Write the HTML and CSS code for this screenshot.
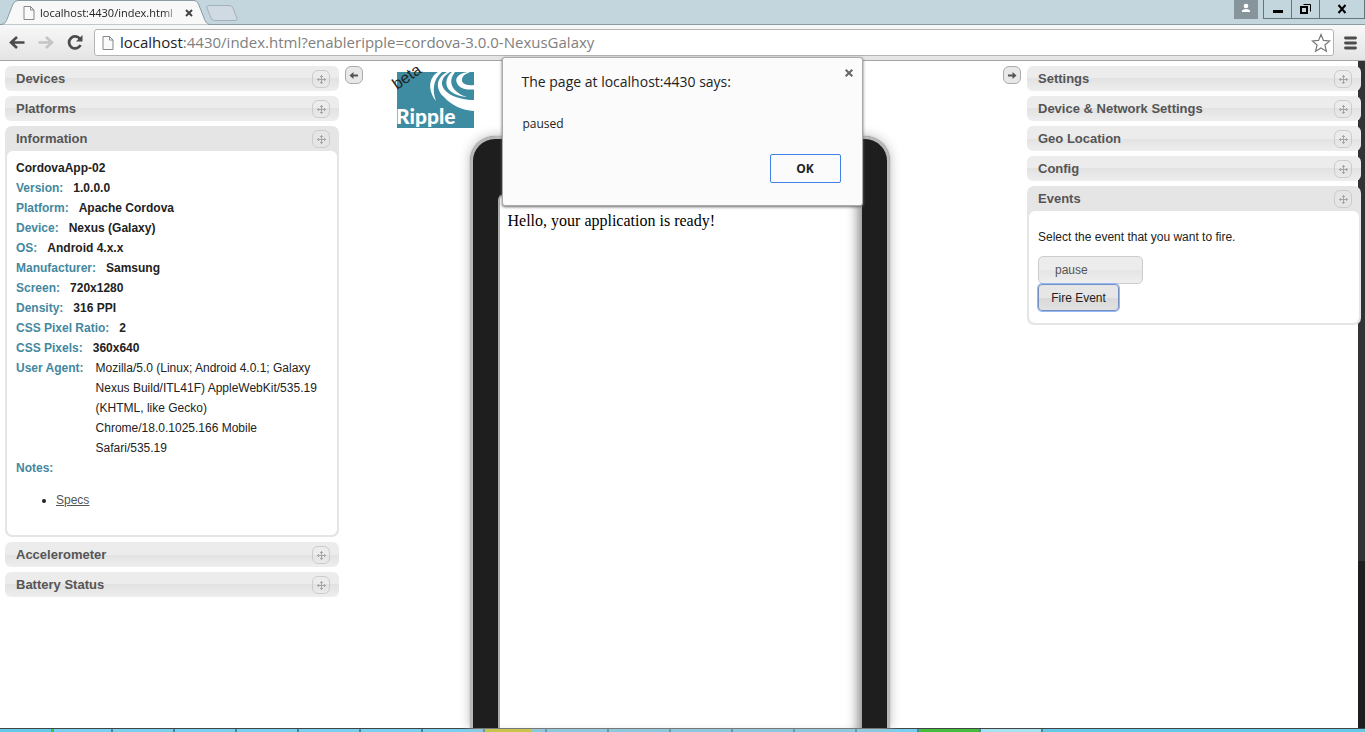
FILE: index.html
```html
<!DOCTYPE html>
<html lang="en">
<head>
<meta charset="utf-8">
<title>localhost:4430/index.html</title>
<link rel="stylesheet" href="styles.css">
</head>
<body>
<svg class="defs" aria-hidden="true">
  <symbol id="move" viewBox="0 0 16 16"><path d="M8.500 4v9M4 8.500h9M7 5.500h3M7 11.500h3M5.500 7v3M11.500 7v3" fill="none" stroke="#a5a5a5"/></symbol>
  <symbol id="page" viewBox="0 0 12 14"><path d="M1 .5h6.500l3.500 3.500v9.500H1zM7.500 .5V4H11" fill="#fafafa" stroke="#888"/></symbol>
</svg>
<header class="browser">
  <div class="titlebar">
    <div class="tab">
      <svg class="tab-shape" viewBox="0 0 240 25"><path d="M0 24.500C5 24.500 6 22 7.500 18L13 4Q14.500 .5 18 .5H194Q197 .5 198.500 4L204 18C206 23 207 24.500 211 24.500" fill="#f8f8f8" stroke="#8a9ba3"/><path d="M210 5.500H229Q232 5.500 233 8L237 18Q238 20.500 235 20.500H215Q212 20.500 211 18L207 8Q206 5.500 210 5.500Z" fill="#cfdae3" stroke="#a3b1bb"/></svg>
      <svg class="page-icon"><use href="#page"/></svg>
      <span class="tab-title">localhost:4430/index.html</span>
      <button class="tab-close" aria-label="Close tab"><svg viewBox="0 0 8 8"><path d="M1 1l6 6M7 1L1 7" stroke="#444" stroke-width="2"/></svg></button>
    </div>
    <div class="window-controls">
      <button class="user" aria-label="User"><svg viewBox="0 0 24 19"><circle cx="12" cy="6" r="2.300" fill="#fff"/><path d="M8 12V10.500Q9 9 12 9T16 10.500V12Z" fill="#fff"/></svg></button>
      <button class="win" aria-label="Minimize"><svg viewBox="0 0 28 19"><path d="M9 11.500H19" stroke="#000" stroke-width="3"/></svg></button>
      <button class="win" aria-label="Restore"><svg viewBox="0 0 28 19"><path d="M11.500 4.500H18.500V11.500" fill="none" stroke="#000"/><path d="M9 7H15V13H9Z" fill="none" stroke="#000" stroke-width="2"/></svg></button>
      <button class="win wide" aria-label="Close window"><svg viewBox="0 0 28 19"><path d="M10.500 5L17.500 13M17.500 5L10.500 13" stroke="#000" stroke-width="2"/></svg></button>
    </div>
  </div>
  <div class="toolbar">
    <button class="nav" aria-label="Back"><svg viewBox="0 0 16 16"><path d="M15.500 7.500H2M8 2L2 7.500L8 13" fill="none" stroke="#4c4c4c" stroke-width="2.600"/></svg></button>
    <button class="nav" aria-label="Forward"><svg viewBox="0 0 16 16"><path d="M.5 7.500H14M8 2L14 7.500L8 13" fill="none" stroke="#c5c5c5" stroke-width="2.600"/></svg></button>
    <button class="nav" aria-label="Reload"><svg viewBox="0 0 16 16"><path d="M13 4A6 6 0 1 0 13.500 10" fill="none" stroke="#4c4c4c" stroke-width="2.800"/><path d="M15.500 0V6.500H9Z" fill="#4c4c4c"/></svg></button>
    <div class="address">
      <svg class="page-icon"><use href="#page"/></svg>
      <span class="url"><b>localhost</b>:4430/index.html?enableripple=cordova-3.0.0-NexusGalaxy</span>
      <svg class="star" viewBox="0 0 20 20"><path d="M10 1.500L12.400 7.400L18.700 7.900L13.900 12L15.400 18.200L10 14.900L4.600 18.200L6.100 12L1.300 7.900L7.600 7.400Z" fill="#fff" stroke="#777" stroke-width="1.200"/></svg>
    </div>
    <button class="menu" aria-label="Menu"><svg viewBox="0 0 13 14"><path d="M1.500 2H11.500M1.500 7H11.500M1.500 12H11.500" stroke="#4c4c4c" stroke-width="2.800" stroke-linecap="round"/></svg></button>
  </div>
</header>

<div class="workspace">
  <aside class="panels">
    <section class="panel"><h2>Devices<svg class="handle"><use href="#move"/></svg></h2></section>
    <section class="panel"><h2>Platforms<svg class="handle"><use href="#move"/></svg></h2></section>
    <section class="panel open"><h2>Information<svg class="handle"><use href="#move"/></svg></h2>
      <div class="panel-body info">
        <strong>CordovaApp-02</strong>
        <dl>
          <div><dt>Version:</dt><dd>1.0.0.0</dd></div>
          <div><dt>Platform:</dt><dd>Apache Cordova</dd></div>
          <div><dt>Device:</dt><dd>Nexus (Galaxy)</dd></div>
          <div><dt>OS:</dt><dd>Android 4.x.x</dd></div>
          <div><dt>Manufacturer:</dt><dd>Samsung</dd></div>
          <div><dt>Screen:</dt><dd>720x1280</dd></div>
          <div><dt>Density:</dt><dd>316 PPI</dd></div>
          <div><dt>CSS Pixel Ratio:</dt><dd>2</dd></div>
          <div><dt>CSS Pixels:</dt><dd>360x640</dd></div>
          <div class="agent"><dt>User Agent:</dt><dd>Mozilla/5.0 (Linux; Android 4.0.1; Galaxy Nexus Build/ITL41F) AppleWebKit/535.19 (KHTML, like Gecko) Chrome/18.0.1025.166 Mobile Safari/535.19</dd></div>
          <div><dt>Notes:</dt></div>
        </dl>
        <ul><li><a href="#specs">Specs</a></li></ul>
      </div>
    </section>
    <section class="panel"><h2>Accelerometer<svg class="handle"><use href="#move"/></svg></h2></section>
    <section class="panel"><h2>Battery Status<svg class="handle"><use href="#move"/></svg></h2></section>
  </aside>
  <button class="toggle" aria-label="Hide left panels"><svg viewBox="0 0 10 10"><path d="M9 5.500H2" stroke="#555" stroke-width="2"/><path d="M0.500 5.500L4.500 2V9Z" fill="#555"/></svg></button>
  <main class="stage">
    <svg class="logo" viewBox="0 0 86 68" role="img" aria-label="Ripple beta">
      <path d="M7 10H84V66H7Z" fill="#3d8ca1"/>
      <g fill="#fff">
        <path d="M48 10C38 16 38 29 46 39C42 28 43 18 52 10Z"/>
        <path d="M57 10C46 16 45 27 54 35C62 44 72 48 84 49V38C68 38 51 31 52 20Q53 14 60 10Z"/>
        <path d="M62 10C52 18 54 34 79 35C62 31 57 20 65 10Z"/>
        <path d="M67 10C58 20 64 35 84 36V33C69 32 62 20 69 10Z" fill="#3d8ca1"/>
        <path d="M78 10C70 11 65 15 66.500 20C69 27 76 28 84 27.500V23C76 24 71 21 72 17C73 13 76 12 80 10Z"/>
      </g>
      <text class="logo-name" x="6" y="62">Ripple</text>
      <text class="logo-beta" transform="translate(7 28) rotate(-35)">beta</text>
    </svg>
    <div class="device"><div class="screen">Hello, your application is ready!</div></div>
  </main>
  <button class="toggle" aria-label="Hide right panels"><svg viewBox="0 0 10 10"><path d="M1 5.500H8" stroke="#555" stroke-width="2"/><path d="M9.500 5.500L5.500 2V9Z" fill="#555"/></svg></button>
  <aside class="panels">
    <section class="panel"><h2>Settings<svg class="handle"><use href="#move"/></svg></h2></section>
    <section class="panel"><h2>Device &amp; Network Settings<svg class="handle"><use href="#move"/></svg></h2></section>
    <section class="panel"><h2>Geo Location<svg class="handle"><use href="#move"/></svg></h2></section>
    <section class="panel"><h2>Config<svg class="handle"><use href="#move"/></svg></h2></section>
    <section class="panel open"><h2>Events<svg class="handle"><use href="#move"/></svg></h2>
      <div class="panel-body events">
        <label for="event">Select the event that you want to fire.</label>
        <select id="event"><option>pause</option></select>
        <button class="fire">Fire Event</button>
      </div>
    </section>
  </aside>
  <div class="scrollbar"></div>
</div>

<footer class="taskbar">
  <i class="start"></i><i class="mark"></i><i class="first"></i><i></i><i></i><i></i><i></i><i></i><i></i><i class="yellow"></i><i></i><i></i><i></i><i></i><i></i><i></i><i class="green"></i><i class="pale"></i>
</footer>

<div class="dialog" role="dialog" aria-labelledby="dialog-title">
  <button class="dialog-close" aria-label="Close"><svg viewBox="0 0 8 8"><path d="M.7 .7l6.600 6.600M7.300 .7L.7 7.300" stroke="#666" stroke-width="2"/></svg></button>
  <h1 id="dialog-title">The page at localhost:4430 says:</h1>
  <p>paused</p>
  <button class="ok">OK</button>
</div>
</body>
</html>
```
FILE: styles.css
```css
* { box-sizing: border-box; }
body {
  margin: 0;
  height: 100vh;
  display: flex;
  flex-direction: column;
  position: relative;
  overflow: hidden;
  background: #fff;
  color: #222;
  font: 12px/20px "Liberation Sans", Arial, sans-serif;
}
svg { display: block; }
.defs { position: absolute; width: 0; height: 0; }
button { padding: 0; border: 0; background: none; font: inherit; color: inherit; }

.browser { font-family: "Open Sans", sans-serif; border-bottom: 1px solid #a5a5a5; }
.titlebar {
  display: flex;
  justify-content: space-between;
  height: 25px;
  background: #c3d6dd;
  border-bottom: 1px solid #8a9ba3;
}
.tab {
  position: relative;
  display: flex;
  align-items: center;
  width: 240px;
  height: 25px;
  padding-left: 23px;
}
.tab-shape { position: absolute; left: 0; top: 0; width: 240px; height: 25px; }
.page-icon { position: relative; flex: none; width: 12px; height: 14px; }
.tab-title {
  position: relative;
  width: 140px;
  margin-left: 5px;
  white-space: nowrap;
  color: #222;
  font-size: 11px;
  -webkit-mask-image: linear-gradient(to right, #000 88%, transparent);
  mask-image: linear-gradient(to right, #000 88%, transparent);
}
.tab-close { position: relative; width: 8px; margin-left: 5px; }
.window-controls { display: flex; }
.window-controls button { height: 19px; }
.window-controls svg { height: 19px; margin: 0 auto; }
.user { width: 24px; margin-right: 5px; background: #87949b; }
.win { width: 28px; border: solid #66747b; border-width: 0 0 1px 1px; }
.wide { width: 46px; border-right-width: 1px; }
.toolbar {
  display: flex;
  align-items: center;
  height: 35px;
  padding: 0 8px 0 9px;
  background: linear-gradient(#f8f8f8, #e4e4e4);
}
.nav { width: 16px; margin-right: 13px; }
.nav:nth-child(3) { margin-right: 11px; }
.address {
  flex: 1;
  display: flex;
  align-items: center;
  height: 27px;
  padding: 0 2px 0 7px;
  background: #fff;
  border: 1px solid #b4b4b4;
  border-radius: 3px;
}
.url { flex: 1; margin-left: 6px; padding-bottom: 2px; color: #808080; font-size: 15px; }
.url b { color: #222; font-weight: 400; }
.star { width: 20px; height: 20px; }
.menu { width: 13px; margin-left: 10px; }

.workspace { position: relative; flex: 1; min-height: 0; display: flex; align-items: flex-start; padding: 5px 4px 0 5px; }
.panels { position: relative; z-index: 2; width: 334px; flex: none; display: grid; gap: 5px; }
.panel h2 {
  display: flex;
  align-items: center;
  justify-content: space-between;
  height: 25px;
  margin: 0;
  padding: 0 9px 0 11px;
  border-radius: 6px;
  background: linear-gradient(#ececec 50%, #e2e2e2 50%, #eee);
  color: #555;
  font-size: 13px;
}
.panel.open { background: #e5e5e5; border-radius: 7px; padding-bottom: 2px; }
.panel.open h2 { background: none; }
.handle { width: 18px; height: 18px; border: 1px solid #ccc; border-radius: 6px; }
.panel-body { margin: 0 2px; padding: 7px 9px; background: #fff; border-radius: 6px; }
.info { padding-bottom: 13px; }
dl { margin: 0; }
dl div { display: flex; gap: 10px; }
dt { flex: none; font-weight: 700; color: #4488a0; }
dd { margin: 0; font-weight: 700; }
dl .agent { gap: 12px; }
.agent dd { font-weight: 400; }
ul { margin: 12px 0; padding-left: 40px; }
a { color: #555; }
.toggle {
  flex: none;
  display: grid;
  place-items: center;
  width: 18px;
  height: 18px;
  margin: 0 6px;
  background: #e8e8e8;
  border: 1px solid #aaa;
  border-radius: 6px;
}
.toggle svg { width: 10px; height: 10px; }
.events { display: grid; justify-items: start; padding-top: 16px; padding-bottom: 12px; }
select {
  appearance: none;
  width: 105px;
  height: 28px;
  margin-top: 9px;
  padding: 0 16px;
  border: 1px solid #ccc;
  border-radius: 5px;
  background: linear-gradient(#ececec 50%, #e5e5e5 50%, #eee);
  color: #555;
  font: inherit;
}
.fire {
  width: 81px;
  height: 27px;
  border: 1px solid #7590c0;
  border-radius: 4px;
  box-shadow: 0 0 0 1px #94b7f5;
  background: linear-gradient(#e6e6e6 50%, #d8d8d8 50%, #e2e2e2);
}

.stage { flex: 1; align-self: stretch; display: grid; min-width: 0; }
.stage > * { grid-area: 1 / 1; }
.logo { width: 86px; height: 68px; margin: -4px 0 0 27px; overflow: visible; }
.stage .logo { margin-left: 21px; }
.logo-name { fill: #fff; font: 900 21px Lato, sans-serif; }
.logo-beta { fill: #222; font: 16px "Liberation Sans", sans-serif; }
.device {
  justify-self: center;
  display: flex;
  width: 420px;
  margin: 70px 7px 0 0;
  padding: 55px 25px 0;
  background: #1e1e1e;
  border: 3px solid #b8b8b8;
  border-bottom: 0;
  border-radius: 25px 25px 0 0;
  box-shadow: 0 0 1px #666, 0 0 12px #bbb;
}
.screen {
  flex: 1;
  padding: 15px 8px;
  background: #fff;
  border: solid #aaa;
  border-width: 2px 0 0 2px;
  border-radius: 6px 0 0 0;
  box-shadow: inset -12px 0 12px -8px #888;
  color: #000;
  font: 16px/20px "Liberation Serif", serif;
}
.scrollbar { position: absolute; right: 0; top: 0; bottom: 0; width: 7px; background: linear-gradient(#333 75%, #1e1e1e 75%); }

.taskbar { display: flex; height: 4px; background: #66c9e8; border-top: 1px solid #444; }
.taskbar i { width: 62px; background: #78d0ee; border-right: 2px solid #4a8798; }
.taskbar .start { width: 51px; background: none; border: 0; }
.taskbar .mark { width: 3px; background: #2cc943; border: 0; }
.taskbar .first { width: 59px; }
.taskbar .yellow { background: linear-gradient(to right, #cfc817 46px, #78d0ee 46px); }
.taskbar .green { background: #43bd3d; }
.taskbar .pale { background: #a5e2f2; }

.dialog {
  position: absolute;
  z-index: 5;
  top: 57px;
  left: 50%;
  width: 361px;
  margin-left: -181px;
  padding: 14px 21px 22px 19px;
  background: #fbfbfb;
  border: 1px solid #aaa;
  border-radius: 3px;
  box-shadow: 0 1px 3px #666;
  color: #222;
  font-family: "Open Sans", sans-serif;
}
.dialog h1 { margin: 0; font-size: 14px; font-weight: 400; }
.dialog p { margin: 22px 0 20px 1px; color: #222; }
.dialog-close { position: absolute; top: 11px; right: 9px; width: 8px; }
.ok {
  display: block;
  width: 71px;
  height: 29px;
  margin-left: auto;
  border: 1px solid #4080e8;
  border-radius: 2px;
  font-weight: 700;
}
```
